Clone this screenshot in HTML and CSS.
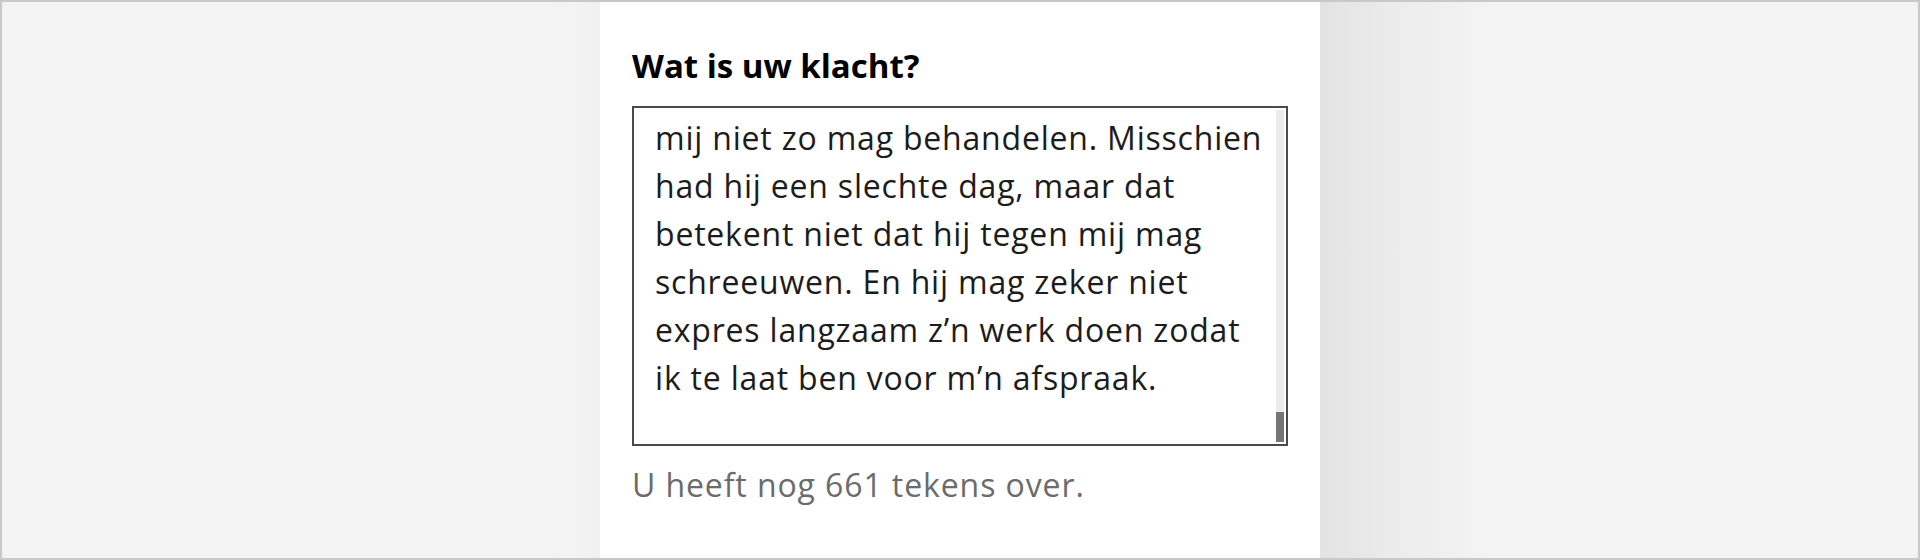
FILE: index.html
```html
<!DOCTYPE html>
<html lang="nl">
<head>
<meta charset="utf-8">
<title>Wat is uw klacht?</title>
<link rel="stylesheet" href="styles.css">
</head>
<body>
<div class="frame">
  <div class="side side-left"></div>
  <main class="panel">
    <label class="question" for="klacht">Wat is uw klacht?</label>
    <div class="textarea" id="klacht" role="textbox" aria-multiline="true">
      <div class="ta-text">
        <span class="line">mij niet zo mag behandelen. Misschien</span>
        <span class="line">had hij een slechte dag, maar dat</span>
        <span class="line">betekent niet dat hij tegen mij mag</span>
        <span class="line">schreeuwen. En hij mag zeker niet</span>
        <span class="line">expres langzaam z’n werk doen zodat</span>
        <span class="line">ik te laat ben voor m’n afspraak.</span>
      </div>
      <div class="ta-scroll"><div class="ta-thumb"></div></div>
    </div>
    <p class="counter">U heeft nog 661 tekens over.</p>
  </main>
  <div class="side side-right"></div>
</div>
</body>
</html>
```
FILE: styles.css
```css
* { box-sizing: border-box; }

html, body {
  margin: 0;
  padding: 0;
}

body {
  width: 1920px;
  height: 560px;
  overflow: hidden;
  font-family: "Open Sans", "Noto Sans", sans-serif;
  background: #f4f4f4;
}

.frame {
  display: flex;
  width: 1920px;
  height: 560px;
  border: 2px solid #c8c8c8;
  background: #f4f4f4;
}

.side-left {
  flex: 0 0 598px;
  background: linear-gradient(to right, #f4f4f4 540px, #f1f1f1 598px);
}

.panel {
  flex: 0 0 720px;
  background: #ffffff;
  padding: 44px 32px 0 32px;
  display: flex;
  flex-direction: column;
}

.side-right {
  flex: 1 1 auto;
  background: linear-gradient(to right, #e3e3e3 0px, #ececec 80px, #f4f4f4 175px);
}

.question {
  display: block;
  font-size: 33px;
  line-height: 40px;
  font-weight: 700;
  color: #000;
}

.textarea {
  margin-top: 20px;
  width: 656px;
  height: 340px;
  border: 2px solid #4b4b4b;
  display: flex;
  background: #fff;
  overflow: hidden;
}

.ta-text {
  flex: 1 1 auto;
  padding: 6px 0 0 21px;
  font-size: 32px;
  line-height: 48px;
  letter-spacing: 0.8px;
  color: #1c1c1c;
}

.line {
  display: block;
  white-space: nowrap;
}

.ta-scroll {
  flex: 0 0 8px;
  margin: 2px 2px 2px 0;
  background: #ebebeb;
  display: flex;
  flex-direction: column;
  justify-content: flex-end;
}

.ta-thumb {
  height: 30px;
  background: #757575;
}

.counter {
  margin: 19px 0 0 0;
  font-size: 32px;
  line-height: 40px;
  letter-spacing: 0.9px;
  color: #6b6b6b;
}
```
